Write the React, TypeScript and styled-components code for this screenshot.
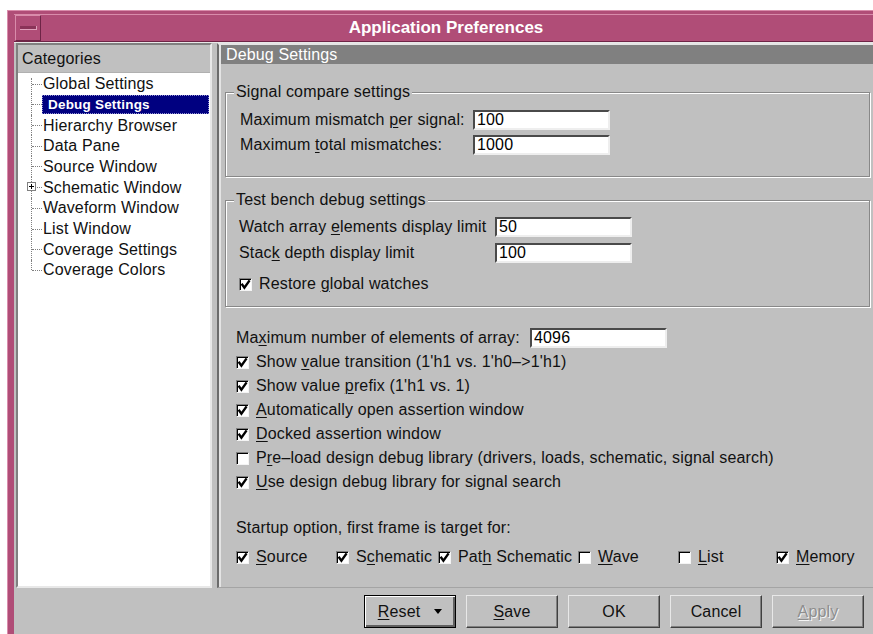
import React from "react";
import styled, { createGlobalStyle } from "styled-components";

const GlobalStyle = createGlobalStyle`
  html, body {
    margin: 0;
    padding: 0;
    background: #fff;
  }
  body {
    font-family: "Liberation Sans", Arial, Helvetica, sans-serif;
    font-size: 16px;
    letter-spacing: 0.15px;
    color: #111;
  }
  * {
    box-sizing: border-box;
  }
`;

const Screen = styled.div`
  width: 873px;
  height: 634px;
  overflow: hidden;
  padding: 10px 0 0 7px;
`;

const Frame = styled.div`
  width: 878px;
  height: 624px;
  background: #b04d77;
  border-top: 1px solid #d98cab;
  border-left: 1px solid #d98cab;
  padding: 3px 7px 0 6px;
  display: flex;
  flex-direction: column;
`;

const TitleBar = styled.div`
  height: 28px;
  display: grid;
  grid-template-columns: 28px 1fr 28px;
  align-items: center;
  border-top: 1px solid #d98cab;
  border-bottom: 1px solid #6e2446;
`;

const MinButton = styled.div`
  width: 26px;
  height: 26px;
  margin-left: 1px;
  border: 1px solid;
  border-color: #d98cab #6e2446 #6e2446 #d98cab;
  display: flex;
  align-items: center;
  justify-content: center;
`;

const MinBar = styled.div`
  width: 17px;
  height: 4px;
  background: #8a3358;
  border-bottom: 1px solid #e0a0bb;
  border-right: 1px solid #e0a0bb;
`;

const Title = styled.div`
  text-align: center;
  color: #fff;
  font-weight: bold;
  font-size: 17px;
  letter-spacing: 0;
`;

const Body = styled.div`
  flex: 1;
  background: #c0c0c0;
  border-top: 1px solid #e8e8e8;
  padding: 0 0 0 2px;
  display: flex;
  flex-direction: column;
`;

const Main = styled.div`
  height: 545px;
  display: flex;
  gap: 5px;
`;

/* ---------- category tree ---------- */

const CategoryPanel = styled.div`
  width: 196px;
  flex: none;
  background: #fff;
  border: 2px solid;
  border-color: #808080 #e8e8e8 #e8e8e8 #808080;
  display: flex;
  flex-direction: column;
`;

const CategoryHeader = styled.div`
  height: 28px;
  line-height: 28px;
  padding-left: 4px;
  background: #c0c0c0;
  border-bottom: 1px solid #b0b0b0;
`;

const TreeList = styled.div`
  padding-top: 0.4px;
`;

const TreeRow = styled.div<{ $first?: boolean; $last?: boolean }>`
  position: relative;
  height: 20.7px;
  display: flex;
  align-items: center;

  &::before {
    content: "";
    position: absolute;
    left: 13px;
    top: ${(p) => (p.$first ? "5px" : "0")};
    bottom: ${(p) => (p.$last ? "50%" : "0")};
    border-left: 1px dotted #808080;
  }
  &::after {
    content: "";
    position: absolute;
    left: 14px;
    top: 50%;
    width: 10px;
    border-top: 1px dotted #808080;
  }
`;

const ExpandBox = styled.span`
  position: absolute;
  left: 9px;
  top: 50%;
  margin-top: -5px;
  width: 9px;
  height: 9px;
  z-index: 1;
  background: #fff;
  border: 1px solid #808080;
  display: flex;
`;

const TreeLabel = styled.span<{ $selected?: boolean }>`
  margin-left: 24px;
  height: 19px;
  line-height: 19px;
  padding-left: ${(p) => (p.$selected ? "6px" : "1px")};
  ${(p) =>
    p.$selected &&
    `
    flex: 1;
    margin-right: 1px;
    background: #000080;
    color: #fff;
    font-weight: bold;
    font-size: 13.5px;
    letter-spacing: 0.2px;
    outline: 1px dotted #9090d0;
    outline-offset: -1px;
  `}
`;

/* ---------- settings page ---------- */

const SettingsPanel = styled.div`
  flex: 1;
  margin-right: 2px;
  border-top: 2px solid #e4e4e4;
  border-left: 2px solid #6c6c6c;
  border-bottom: 1px solid #a4a4a4;
  padding-left: 2px;
  box-shadow: inset 2px 0 0 #e4e4e4;
  display: flex;
  flex-direction: column;
`;

const PanelHeader = styled.div`
  height: 19px;
  line-height: 19px;
  padding-left: 5px;
  background: #808080;
  color: #fff;
`;

const PanelContent = styled.div`
  padding: 19px 6px 0 4px;
`;

const Group = styled.fieldset<{ $gap?: number }>`
  margin: ${(p) => p.$gap ?? 0}px 0 0 0;
  min-width: 0;
  border: 1px solid #888;
  box-shadow: inset 1px 1px 0 #fff, 1px 1px 0 #fff;
  padding: 0;
`;

const GroupTitle = styled.legend`
  margin-left: 8px;
  padding: 0 2px;
  line-height: 18px;
  background: #c0c0c0;
`;

const GroupBody = styled.div<{ $pad: string }>`
  padding: ${(p) => p.$pad};
`;

const FieldGrid = styled.div<{ $label: number; $gap: number; $row?: number }>`
  display: grid;
  grid-template-columns: ${(p) => p.$label}px 137px;
  grid-auto-rows: ${(p) => p.$row ?? 20}px;
  row-gap: ${(p) => p.$gap}px;
  align-items: center;
`;

const FieldLabel = styled.span`
  white-space: nowrap;
`;

const TextField = styled.input`
  width: 137px;
  height: 20px;
  margin: 0;
  padding: 0 0 0 2px;
  font: inherit;
  letter-spacing: inherit;
  color: #000;
  background: #fff;
  border: 2px solid;
  border-color: #4a4a4a #eeeeee #eeeeee #4a4a4a;
  outline: none;
`;

const Mn = styled.span`
  text-decoration: underline;
  text-decoration-thickness: 1px;
  text-underline-offset: 2px;
`;

const CheckRow = styled.label<{ $h?: number; $top?: number }>`
  height: ${(p) => p.$h ?? 24}px;
  margin-top: ${(p) => p.$top ?? 0}px;
  display: flex;
  align-items: center;
  gap: 7px;
  white-space: nowrap;
`;

const Box = styled.span`
  width: 13px;
  height: 13px;
  flex: none;
  background: #fff;
  border: 1px solid;
  border-color: #808080 #f4f4f4 #f4f4f4 #808080;
  box-shadow: inset 1px 1px 0 #000;
  display: flex;
`;

const OptionList = styled.div`
  margin-top: 19px;
  padding-left: 11px;
`;

const StartupTitle = styled.div`
  margin-top: 24px;
  height: 20px;
  line-height: 20px;
`;

const StartupGrid = styled.div`
  margin-top: 9px;
  display: grid;
  grid-template-columns: 100px 102px 140px 100px 98px auto;
`;

/* ---------- dialog buttons ---------- */

const ButtonBar = styled.div`
  flex: 1;
  display: flex;
  justify-content: flex-end;
  align-items: flex-start;
  gap: 10px;
  padding: 7px 14px 0 0;
`;

const Button = styled.div<{ $default?: boolean; $disabled?: boolean }>`
  width: 92px;
  height: 33px;
  display: flex;
  align-items: center;
  justify-content: center;
  gap: 14px;
  background: #c0c0c0;
  border: 1px solid;
  border-color: ${(p) => (p.$default ? "#000" : "#e8e8e8 #404040 #404040 #e8e8e8")};
  box-shadow: ${(p) =>
    p.$default
      ? "inset 1px 1px 0 #fff, inset -2px -2px 0 #606060"
      : "inset -1px -1px 0 #808080"};
  color: ${(p) => (p.$disabled ? "#8e8e8e" : "#111")};
  text-shadow: ${(p) => (p.$disabled ? "1px 1px 0 #f4f4f4" : "none")};
`;

const DropArrow = styled.span`
  width: 0;
  height: 0;
  border-left: 4px solid transparent;
  border-right: 4px solid transparent;
  border-top: 5px solid #000;
`;

const Check: React.FC<{ checked?: boolean; children: React.ReactNode; h?: number; top?: number }> = ({
  checked,
  children,
  h,
  top,
}) => (
  <CheckRow $h={h} $top={top}>
    <Box>
      {checked && (
        <svg width="11" height="11" viewBox="0 0 11 11">
          <path d="M1.6 4.8 L4.4 8.6 L9.6 1.4" stroke="#000" strokeWidth="2.4" fill="none" />
        </svg>
      )}
    </Box>
    <span>{children}</span>
  </CheckRow>
);

const categories = [
  "Global Settings",
  "Debug Settings",
  "Hierarchy Browser",
  "Data Pane",
  "Source Window",
  "Schematic Window",
  "Waveform Window",
  "List Window",
  "Coverage Settings",
  "Coverage Colors",
];

const App: React.FC = () => {
  return (
    <Screen>
      <GlobalStyle />
      <Frame>
        <TitleBar>
          <MinButton>
            <MinBar />
          </MinButton>
          <Title>Application Preferences</Title>
          <span />
        </TitleBar>
        <Body>
          <Main>
            <CategoryPanel>
              <CategoryHeader>Categories</CategoryHeader>
              <TreeList>
                {categories.map((name, i) => (
                  <TreeRow key={name} $first={i === 0} $last={i === categories.length - 1}>
                    {name === "Schematic Window" && (
                      <ExpandBox>
                        <svg width="7" height="7" viewBox="0 0 7 7">
                          <path d="M1 3.5 H6 M3.5 1 V6" stroke="#000" strokeWidth="1" />
                        </svg>
                      </ExpandBox>
                    )}
                    <TreeLabel $selected={name === "Debug Settings"}>{name}</TreeLabel>
                  </TreeRow>
                ))}
              </TreeList>
            </CategoryPanel>

            <SettingsPanel>
              <PanelHeader>Debug Settings</PanelHeader>
              <PanelContent>
                <Group>
                  <GroupTitle>Signal compare settings</GroupTitle>
                  <GroupBody $pad="9px 0 21px 14px">
                    <FieldGrid $label={233} $gap={5}>
                      <FieldLabel>
                        Maximum mismatch <Mn>p</Mn>er signal:
                      </FieldLabel>
                      <TextField readOnly value="100" />
                      <FieldLabel>
                        Maximum <Mn>t</Mn>otal mismatches:
                      </FieldLabel>
                      <TextField readOnly value="1000" />
                    </FieldGrid>
                  </GroupBody>
                </Group>

                <Group $gap={14}>
                  <GroupTitle>Test bench debug settings</GroupTitle>
                  <GroupBody $pad="8px 0 11px 13px">
                    <FieldGrid $label={256} $gap={6}>
                      <FieldLabel>
                        Watch array <Mn>e</Mn>lements display limit
                      </FieldLabel>
                      <TextField readOnly value="50" />
                      <FieldLabel>
                        Stac<Mn>k</Mn> depth display limit
                      </FieldLabel>
                      <TextField readOnly value="100" />
                    </FieldGrid>
                    <Check checked h={22} top={10}>
                      Restore <Mn>g</Mn>lobal watches
                    </Check>
                  </GroupBody>
                </Group>

                <OptionList>
                  <FieldGrid $label={294} $gap={0} $row={24}>
                    <FieldLabel>
                      Ma<Mn>x</Mn>imum number of elements of array:
                    </FieldLabel>
                    <TextField readOnly value="4096" />
                  </FieldGrid>
                  <Check checked>
                    Show <Mn>v</Mn>alue transition (1'h1 vs. 1'h0{"\u2013"}&gt;1'h1)
                  </Check>
                  <Check checked>
                    Show value <Mn>p</Mn>refix (1'h1 vs. 1)
                  </Check>
                  <Check checked>
                    <Mn>A</Mn>utomatically open assertion window
                  </Check>
                  <Check checked>
                    <Mn>D</Mn>ocked assertion window
                  </Check>
                  <Check>
                    P<Mn>r</Mn>e{"\u2013"}load design debug library (drivers, loads, schematic, signal search)
                  </Check>
                  <Check checked>
                    <Mn>U</Mn>se design debug library for signal search
                  </Check>

                  <StartupTitle>Startup option, first frame is target for:</StartupTitle>
                  <StartupGrid>
                    <Check checked h={20}>
                      <Mn>S</Mn>ource
                    </Check>
                    <Check checked h={20}>
                      S<Mn>c</Mn>hematic
                    </Check>
                    <Check checked h={20}>
                      Pat<Mn>h</Mn> Schematic
                    </Check>
                    <Check h={20}>
                      <Mn>W</Mn>ave
                    </Check>
                    <Check h={20}>
                      <Mn>L</Mn>ist
                    </Check>
                    <Check checked h={20}>
                      <Mn>M</Mn>emory
                    </Check>
                  </StartupGrid>
                </OptionList>
              </PanelContent>
            </SettingsPanel>
          </Main>

          <ButtonBar>
            <Button $default>
              <span>
                <Mn>R</Mn>eset
              </span>
              <DropArrow />
            </Button>
            <Button>
              <span>
                <Mn>S</Mn>ave
              </span>
            </Button>
            <Button>OK</Button>
            <Button>Cancel</Button>
            <Button $disabled>
              <span>
                <Mn>A</Mn>pply
              </span>
            </Button>
          </ButtonBar>
        </Body>
      </Frame>
    </Screen>
  );
};

export default App;
